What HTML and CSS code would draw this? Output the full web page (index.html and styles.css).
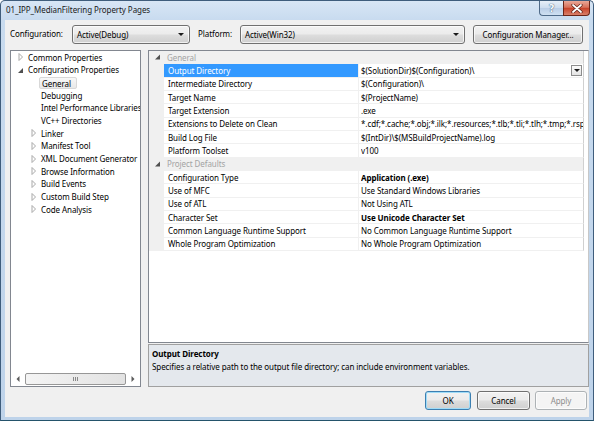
FILE: index.html
```html
<!DOCTYPE html>
<html>
<head>
<meta charset="utf-8">
<title>Property Pages</title>
<link rel="stylesheet" href="styles.css">
</head>
<body>
<div class="window">
  <div class="titlebar">
    <span class="title">01_IPP_MedianFiltering Property Pages</span>
    <div class="caption-btns">
      <div class="cbtn help">?</div>
      <div class="cbtn close">
        <svg width="12" height="9" viewBox="0 0 12 9"><path d="M2 1 L10 8 M10 1 L2 8" stroke="#5a1e14" stroke-width="3.2" stroke-linecap="round"/><path d="M2 1 L10 8 M10 1 L2 8" stroke="#ffffff" stroke-width="1.8" stroke-linecap="round"/></svg>
      </div>
    </div>
  </div>
  <div class="client">
    <div class="toolbar">
      <span class="lbl lbl-config">Configuration:</span>
      <div class="combo combo-config"><span>Active(Debug)</span><i class="arr"></i></div>
      <span class="lbl lbl-plat">Platform:</span>
      <div class="combo combo-plat"><span>Active(Win32)</span><i class="arr"></i></div>
      <div class="btn btn-mgr">Configuration Manager...</div>
    </div>
    <div class="main">
      <div class="tree">
        <div class="tree-items">
          <div class="ti l1"><span class="tw"><svg width="6" height="8" viewBox="0 0 6 8"><path d="M1 0.5 L4.5 4 L1 7.5 Z" fill="#fff" stroke="#a8a8a8"/></svg></span><span class="tt">Common Properties</span></div>
          <div class="ti l1"><span class="tw"><svg width="6" height="8" viewBox="0 0 6 8"><path d="M5 2 L5 7 L0 7 Z" fill="#505050"/></svg></span><span class="tt">Configuration Properties</span></div>
          <div class="ti l2"><span class="tw"></span><span class="tt sel">General</span></div>
          <div class="ti l2"><span class="tw"></span><span class="tt">Debugging</span></div>
          <div class="ti l2"><span class="tw"></span><span class="tt">Intel Performance Libraries</span></div>
          <div class="ti l2"><span class="tw"></span><span class="tt">VC++ Directories</span></div>
          <div class="ti l2"><span class="tw"><svg width="6" height="8" viewBox="0 0 6 8"><path d="M1 0.5 L4.5 4 L1 7.5 Z" fill="#fff" stroke="#a8a8a8"/></svg></span><span class="tt">Linker</span></div>
          <div class="ti l2"><span class="tw"><svg width="6" height="8" viewBox="0 0 6 8"><path d="M1 0.5 L4.5 4 L1 7.5 Z" fill="#fff" stroke="#a8a8a8"/></svg></span><span class="tt">Manifest Tool</span></div>
          <div class="ti l2"><span class="tw"><svg width="6" height="8" viewBox="0 0 6 8"><path d="M1 0.5 L4.5 4 L1 7.5 Z" fill="#fff" stroke="#a8a8a8"/></svg></span><span class="tt">XML Document Generator</span></div>
          <div class="ti l2"><span class="tw"><svg width="6" height="8" viewBox="0 0 6 8"><path d="M1 0.5 L4.5 4 L1 7.5 Z" fill="#fff" stroke="#a8a8a8"/></svg></span><span class="tt">Browse Information</span></div>
          <div class="ti l2"><span class="tw"><svg width="6" height="8" viewBox="0 0 6 8"><path d="M1 0.5 L4.5 4 L1 7.5 Z" fill="#fff" stroke="#a8a8a8"/></svg></span><span class="tt">Build Events</span></div>
          <div class="ti l2"><span class="tw"><svg width="6" height="8" viewBox="0 0 6 8"><path d="M1 0.5 L4.5 4 L1 7.5 Z" fill="#fff" stroke="#a8a8a8"/></svg></span><span class="tt">Custom Build Step</span></div>
          <div class="ti l2"><span class="tw"><svg width="6" height="8" viewBox="0 0 6 8"><path d="M1 0.5 L4.5 4 L1 7.5 Z" fill="#fff" stroke="#a8a8a8"/></svg></span><span class="tt">Code Analysis</span></div>
        </div>
        <div class="hscroll">
          <span class="sarrow"><svg width="4" height="6" viewBox="0 0 4 6"><path d="M3.5 0 L0.5 3 L3.5 6 Z" fill="#5c5c5c"/></svg></span>
          <div class="thumb"><span class="grip"></span></div>
          <span class="sarrow"><svg width="4" height="6" viewBox="0 0 4 6"><path d="M0.5 0 L3.5 3 L0.5 6 Z" fill="#5c5c5c"/></svg></span>
        </div>
      </div>
      <div class="right">
        <div class="grid">
          <div class="row cat"><span class="exp"><svg width="6" height="6" viewBox="0 0 6 6"><path d="M5 0.5 L5 5.5 L0 5.5 Z" fill="#505050"/></svg></span><span class="catname">General</span></div>
          <div class="row"><span class="exp"></span><span class="name selname">Output Directory</span><span class="val valsel"><span class="vt">$(SolutionDir)$(Configuration)\</span><span class="ddbtn"><i class="arr"></i></span></span></div>
          <div class="row"><span class="exp"></span><span class="name">Intermediate Directory</span><span class="val"><span class="vt">$(Configuration)\</span></span></div>
          <div class="row"><span class="exp"></span><span class="name">Target Name</span><span class="val"><span class="vt">$(ProjectName)</span></span></div>
          <div class="row"><span class="exp"></span><span class="name">Target Extension</span><span class="val"><span class="vt">.exe</span></span></div>
          <div class="row"><span class="exp"></span><span class="name">Extensions to Delete on Clean</span><span class="val"><span class="vt">*.cdf;*.cache;*.obj;*.ilk;*.resources;*.tlb;*.tli;*.tlh;*.tmp;*.rsp;*.pgc;*.pgd;*.meta;$(TargetPath)</span></span></div>
          <div class="row"><span class="exp"></span><span class="name">Build Log File</span><span class="val"><span class="vt">$(IntDir)\$(MSBuildProjectName).log</span></span></div>
          <div class="row"><span class="exp"></span><span class="name">Platform Toolset</span><span class="val"><span class="vt">v100</span></span></div>
          <div class="row cat"><span class="exp"><svg width="6" height="6" viewBox="0 0 6 6"><path d="M5 0.5 L5 5.5 L0 5.5 Z" fill="#505050"/></svg></span><span class="catname">Project Defaults</span></div>
          <div class="row"><span class="exp"></span><span class="name">Configuration Type</span><span class="val"><span class="vt b">Application (.exe)</span></span></div>
          <div class="row"><span class="exp"></span><span class="name">Use of MFC</span><span class="val"><span class="vt">Use Standard Windows Libraries</span></span></div>
          <div class="row"><span class="exp"></span><span class="name">Use of ATL</span><span class="val"><span class="vt">Not Using ATL</span></span></div>
          <div class="row"><span class="exp"></span><span class="name">Character Set</span><span class="val"><span class="vt b">Use Unicode Character Set</span></span></div>
          <div class="row"><span class="exp"></span><span class="name">Common Language Runtime Support</span><span class="val"><span class="vt">No Common Language Runtime Support</span></span></div>
          <div class="row"><span class="exp"></span><span class="name">Whole Program Optimization</span><span class="val"><span class="vt">No Whole Program Optimization</span></span></div>
        </div>
        <div class="desc">
          <div class="desc-title">Output Directory</div>
          <div class="desc-text">Specifies a relative path to the output file directory; can include environment variables.</div>
        </div>
      </div>
    </div>
    <div class="footer">
      <div class="btn btn-ok">OK</div>
      <div class="btn btn-cancel">Cancel</div>
      <div class="btn btn-apply">Apply</div>
    </div>
  </div>
</div>
</body>
</html>
```
FILE: styles.css
```css
* { box-sizing: border-box; margin: 0; padding: 0; }
html, body { width: 594px; height: 421px; overflow: hidden; }
body {
  font-family: "Noto Sans", "Open Sans", sans-serif;
  font-size: 8px;
  letter-spacing: -0.08px;
  color: #000;
  background: #ffffff;
}
.window {
  width: 594px;
  height: 421px;
  display: flex;
  flex-direction: column;
  border: 1px solid #3f5d7c;
  border-bottom-color: #24536b;
  border-radius: 5px 5px 0 0;
  background: linear-gradient(180deg, #d8e6f5 0px, #c8dbef 19px, #bed3ea 100%);
  padding: 0 4px 3px 4px;
}
.titlebar {
  height: 19px;
  display: flex;
  justify-content: space-between;
  align-items: flex-start;
}
.title {
  margin-top: 3px;
  margin-left: 1px;
  color: #1a1a1a;
  line-height: 11px;
}
.caption-btns {
  display: flex;
  margin-right: -1px;
}
.cbtn {
  height: 15px;
  border: 1px solid #4f6a88;
  border-top: none;
  display: flex;
  align-items: center;
  justify-content: center;
}
.help {
  width: 24px;
  border-right: none;
  border-radius: 0 0 0 4px;
  background: linear-gradient(180deg, #e7eff8 0%, #ccdcee 50%, #b9cde6 51%, #cfe0f2 100%);
  color: #f4f8fc;
  font-family: "DejaVu Sans", sans-serif;
  font-weight: bold;
  font-size: 10px;
  text-shadow: 0 0 1px #44607e, 0 0 1px #44607e;
}
.close {
  width: 27px;
  border-radius: 0 0 4px 0;
  border-color: #6b2518;
  background: linear-gradient(180deg, #e9a898 0%, #d7715b 45%, #c8432a 52%, #d8806a 100%);
}
.client {
  flex: 1;
  background: #f0f0f0;
  display: flex;
  flex-direction: column;
}
.toolbar {
  height: 30px;
  padding: 5px 0 0 5px;
  display: flex;
  align-items: flex-start;
}
.lbl { height: 18px; line-height: 18px; }
.lbl-config { width: 62px; }
.lbl-plat { width: 42px; margin-left: 8px; }
.combo, .btn {
  height: 19px;
  border: 1px solid #707070;
  border-radius: 3px;
  background: linear-gradient(180deg, #f2f2f2 0%, #ebebeb 48%, #dddddd 52%, #cfcfcf 100%);
  box-shadow: inset 0 0 0 1px rgba(255,255,255,0.7);
  display: flex;
  align-items: center;
  white-space: nowrap;
}
.combo { justify-content: space-between; padding: 0 5px 0 4px; }
.combo-config { width: 118px; }
.combo-plat { width: 225px; }
.arr {
  display: block;
  width: 0; height: 0;
  border-left: 3px solid transparent;
  border-right: 3px solid transparent;
  border-top: 3px solid #1a1a1a;
}
.btn { justify-content: center; }
.btn-mgr { width: 110px; margin-left: 8px; }
.main {
  height: 337px;
  display: flex;
  padding-left: 5px;
}
.tree {
  width: 131px;
  border: 1px solid #828790;
  background: #ffffff;
  display: flex;
  flex-direction: column;
  justify-content: space-between;
}
.tree-items { overflow: hidden; }
.ti {
  height: 12.67px;
  display: flex;
  align-items: center;
  white-space: nowrap;
}
.ti.l1 { padding-left: 7px; }
.ti.l2 { padding-left: 20px; }
.tw {
  width: 10px;
  flex: none;
  display: flex;
  align-items: center;
}
.tt { line-height: 11px; padding: 0 2px 0 0; }
.tt.sel {
  margin-left: -2px;
  padding: 0 5px 0 2px;
  height: 12px;
  line-height: 11px;
  border: 1px solid #d8d8d8;
  border-radius: 2px;
  background: linear-gradient(180deg, #f8f8f8, #e8e8e8);
}
.hscroll {
  height: 13px;
  margin: 0 0 1px 0;
  display: flex;
  align-items: center;
  padding: 0 1px;
}
.sarrow {
  width: 12px;
  height: 12px;
  display: flex;
  align-items: center;
  justify-content: center;
  flex: none;
}
.thumb {
  flex: 1;
  height: 12px;
  margin: 0 1px;
  border: 1px solid #979797;
  border-radius: 2px;
  background: linear-gradient(90deg, #f4f4f4, #e2e2e2);
  display: flex;
  align-items: center;
  justify-content: center;
}
.grip {
  width: 6px;
  height: 4px;
  background: repeating-linear-gradient(90deg, #8a8a8a 0 1px, transparent 1px 2px);
}
.right {
  width: 441px;
  margin-left: 7px;
  display: flex;
  flex-direction: column;
  gap: 1px;
}
.grid {
  flex: 1;
  border: 1px solid #828790;
  border-right-color: #c8c8c8;
  background: #ffffff;
  padding-right: 4px;
  overflow: hidden;
}
.row {
  height: 13.33px;
  display: flex;
  white-space: nowrap;
  border-bottom: 1px solid #f0f0f0;
  border-right: 1px solid #d0d0d0;
}
.row.cat { background: #f0f0f0; align-items: center; }
.exp {
  width: 15px;
  flex: none;
  background: #f0f0f0;
  display: flex;
  align-items: center;
  justify-content: center;
  padding-left: 2px;
}
.catname { color: #a3a3a3; padding-left: 3px; line-height: 11px; }
.name {
  width: 194px;
  flex: none;
  padding-left: 4px;
  display: flex;
  align-items: center;
  overflow: hidden;
}
.selname { background: #3399ff; color: #ffffff; }
.val {
  flex: 1;
  min-width: 0;
  border-left: 1px solid #f0f0f0;
  padding-left: 2px;
  display: flex;
  align-items: center;
  overflow: hidden;
}
.vt { overflow: hidden; flex: 1; min-width: 0; }
.vt.b { font-weight: bold; }
.ddbtn {
  width: 11px;
  height: 11px;
  flex: none;
  margin-right: 1px;
  border: 1px solid #8d8d8d;
  background: linear-gradient(180deg, #fbfbfb, #e4e4e4);
  display: flex;
  align-items: center;
  justify-content: center;
}
.desc {
  height: 43px;
  border: 1px solid #a0a0a0;
  background: #e4e8ed;
  padding: 2px 3px;
}
.desc-title { font-weight: bold; line-height: 13px; }
.desc-text { line-height: 13px; white-space: nowrap; }
.footer {
  height: 30px;
  display: flex;
  justify-content: flex-end;
  align-items: flex-start;
  padding: 4px 2px 0 0;
}
.btn-ok {
  width: 46px;
  border-color: #3c7fb1;
  box-shadow: inset 0 0 0 1px #9fdcf8;
}
.btn-cancel { width: 53px; margin-left: 6px; }
.btn-apply {
  width: 52px;
  margin-left: 5px;
  border-color: #adb2b5;
  background: #f4f4f4;
  color: #8d8d8d;
}
```
